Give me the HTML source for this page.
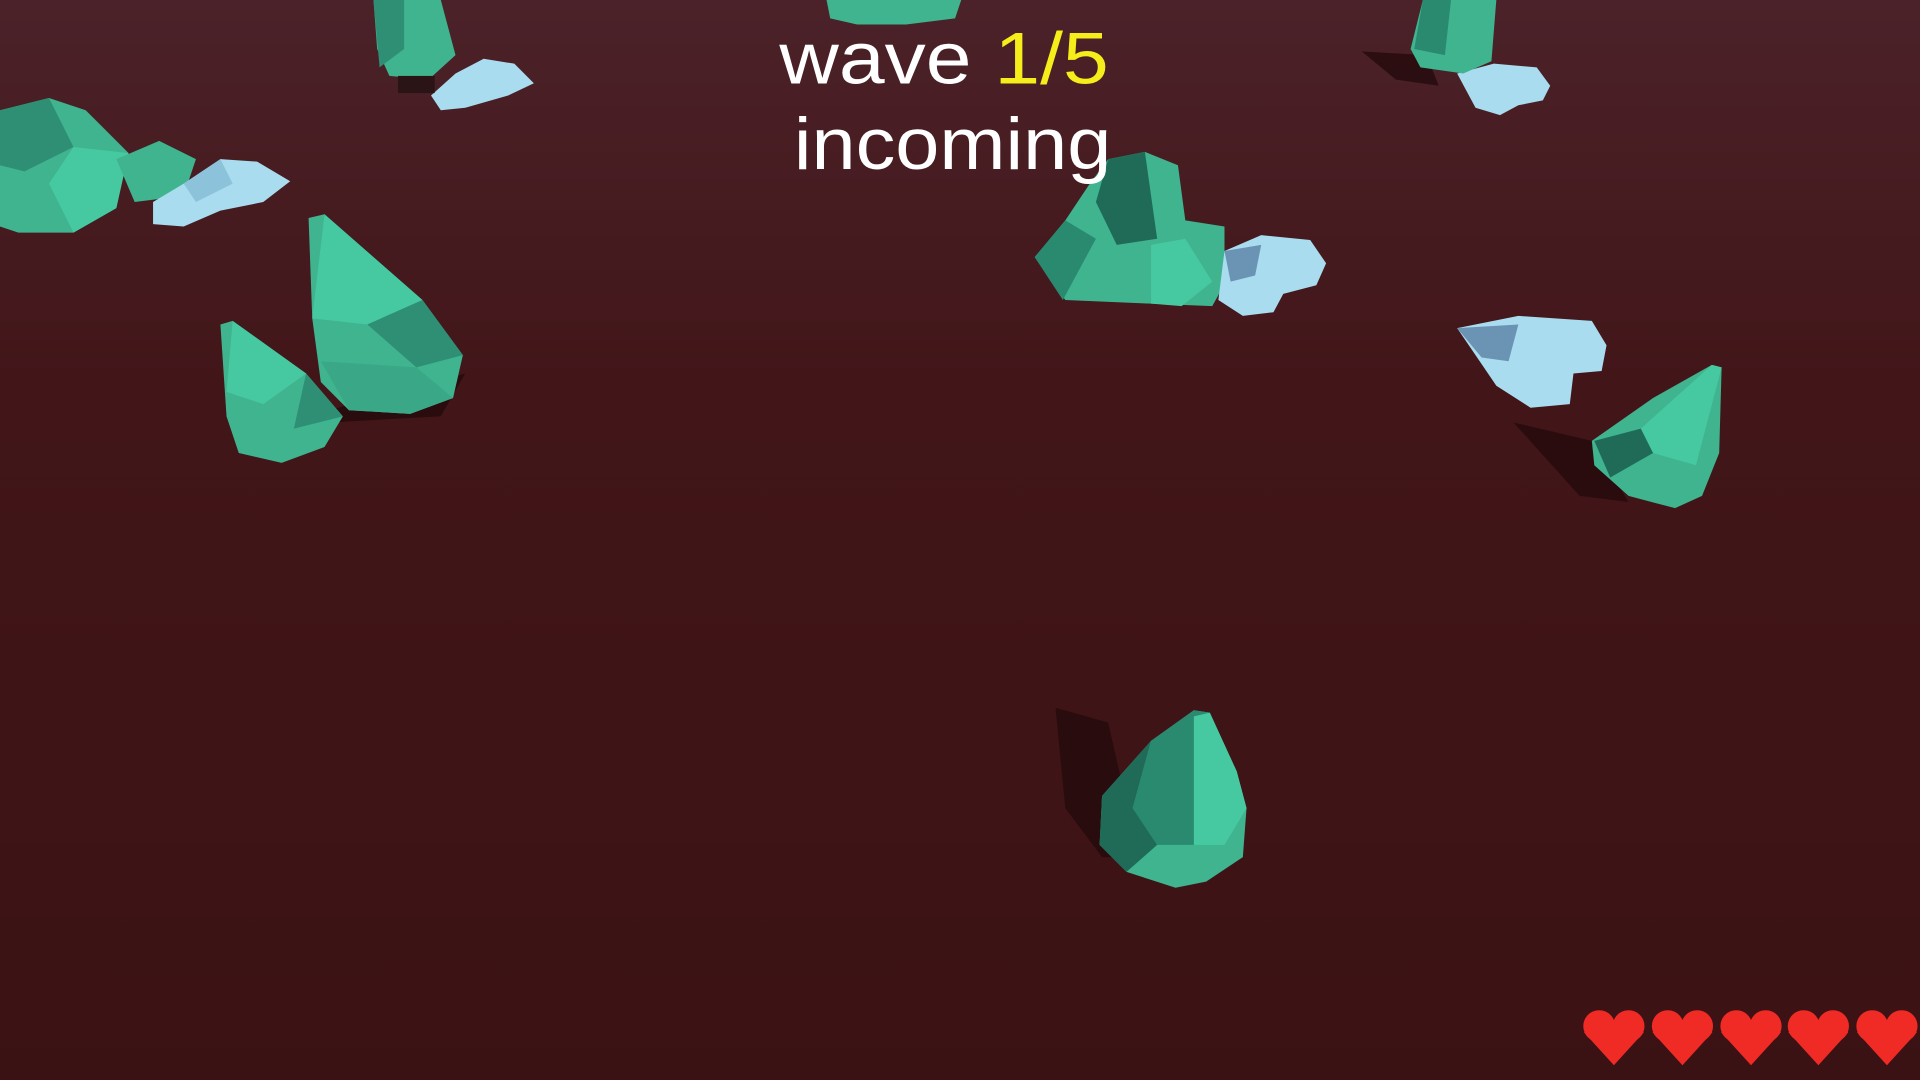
<!DOCTYPE html>
<html><head><meta charset="utf-8">
<style>
html,body{margin:0;padding:0;width:1920px;height:1080px;overflow:hidden;background:#3d1315;}
svg{display:block;width:1920px;height:1080px;}
</style></head>
<body>
<svg viewBox="0 0 1568 882" preserveAspectRatio="none" xmlns="http://www.w3.org/2000/svg">
<defs>
<linearGradient id="bg" x1="0" y1="0" x2="0" y2="1">
<stop offset="0" stop-color="#4b2229"/>
<stop offset="0.35" stop-color="#421619"/>
<stop offset="1" stop-color="#3b1214"/>
</linearGradient>
<g id="heart" fill="#f02a24">
<circle cx="-12" cy="-8" r="13"/>
<circle cx="12" cy="-8" r="13"/>
<path d="M-24.5,-3 L0,24 L24.5,-3 L0,-8Z"/>
</g>
</defs>
<rect width="1568" height="882" fill="url(#bg)"/>

<g fill="#240a0c" opacity="0.8">
<polygon points="862,578 905,590 930,700 900,700 870,660"/>
<polygon points="1236,345 1300,360 1330,410 1290,405"/>
<polygon points="1112,42 1165,45 1175,70 1140,65"/>
<polygon points="250,340 380,305 360,340 270,345"/>
</g>

<polygon points="0,90 40,80 70,90 105,125 95,170 60,190 15,190 0,185" fill="#3fb48f"/>
<polygon points="0,90 40,80 60,120 20,140 0,135" fill="#2f8f74"/>
<polygon points="60,120 105,125 95,170 60,190 40,150" fill="#46c9a0"/>
<polygon points="95,130 130,115 160,130 150,160 110,165" fill="#3fb48f"/>
<polygon points="125,165 150,150 180,130 210,132 237,148 215,165 180,172 150,185 125,183" fill="#a9dcef"/>
<polygon points="150,150 180,130 190,150 160,165" fill="#8cc3db"/>
<polygon points="352,78 372,60 395,48 420,52 436,68 415,78 380,88 360,90" fill="#a9dcef"/>

<polygon points="305,0 360,0 372,45 350,65 318,62 308,40" fill="#3fb48f"/>
<polygon points="305,0 330,0 330,40 310,55" fill="#2f8f74"/>
<rect x="325" y="62" width="30" height="14" fill="#2a1416"/>

<polygon points="252,178 265,175 345,245 378,290 370,325 335,338 285,335 262,312 255,260" fill="#3fb48f"/>
<polygon points="265,175 345,245 300,265 255,260" fill="#46c9a0"/>
<polygon points="300,265 345,245 378,290 340,300" fill="#2f8f74"/>
<polygon points="262,295 340,300 370,325 335,338 285,335" fill="#3aa886"/>
<polygon points="180,265 190,262 250,305 280,340 265,365 230,378 195,370 185,340" fill="#3fb48f"/>
<polygon points="190,262 250,305 215,330 185,320" fill="#46c9a0"/>
<polygon points="250,305 280,340 240,350" fill="#2f8f74"/>

<polygon points="675,0 785,0 780,15 740,20 700,20 678,15" fill="#3fb48f"/>

<polygon points="905,130 935,124 962,135 968,180 1000,185 1000,232 990,250 940,248 870,245 845,210 870,180 890,150" fill="#3fb48f"/>
<polygon points="905,130 935,124 945,195 912,200 895,165" fill="#1f6b57"/>
<polygon points="845,210 870,180 895,195 868,245" fill="#2a8a70"/>
<polygon points="940,200 968,195 990,230 965,250 940,248" fill="#46c9a0"/>
<polygon points="1000,205 1030,192 1070,196 1083,215 1075,233 1048,240 1040,255 1015,258 995,245" fill="#a9dcef"/>
<polygon points="1000,205 1030,200 1025,225 1005,230" fill="#6b93b4"/>

<polygon points="1190,268 1240,258 1300,262 1312,282 1308,303 1285,305 1282,330 1250,333 1222,315 1205,290" fill="#a9dcef"/>
<polygon points="1190,268 1240,265 1232,295 1210,292" fill="#6b93b4"/>
<polygon points="1190,60 1220,52 1255,55 1266,70 1260,82 1240,86 1225,94 1205,88" fill="#a9dcef"/>

<polygon points="1162,0 1222,0 1218,50 1195,60 1160,55 1152,40" fill="#3fb48f"/>
<polygon points="1162,0 1185,0 1180,45 1155,40" fill="#2a8a70"/>

<polygon points="1398,298 1406,300 1404,370 1390,405 1368,415 1330,405 1302,380 1300,360 1350,325" fill="#3fb48f"/>
<polygon points="1398,298 1406,300 1385,380 1350,370 1340,350" fill="#46c9a0"/>
<polygon points="1302,360 1340,350 1350,370 1315,390" fill="#1f6b57"/>

<polygon points="975,580 988,582 1010,630 1018,660 1015,700 985,720 960,725 920,712 898,690 900,650 940,605" fill="#3fb48f"/>
<polygon points="975,580 988,582 975,690 945,690 925,660 940,605" fill="#2a8a70"/>
<polygon points="975,585 988,582 1010,630 1018,660 1000,690 975,690" fill="#46c9a0"/>
<polygon points="900,650 940,605 925,660 945,690 920,712 898,690" fill="#1f6b57"/>

<g font-family="Liberation Sans, sans-serif" font-size="60" text-anchor="middle">
<text x="771" y="68" transform="translate(771 0) scale(1.12 1) translate(-771 0)"><tspan fill="#ffffff">wave </tspan><tspan fill="#f5ee1a">1/5</tspan></text>
<text x="778" y="138" fill="#ffffff" transform="translate(778 0) scale(1.08 1) translate(-778 0)">incoming</text>
</g>

<use href="#heart" x="1318" y="846"/>
<use href="#heart" x="1374" y="846"/>
<use href="#heart" x="1430" y="846"/>
<use href="#heart" x="1485" y="846"/>
<use href="#heart" x="1541" y="846"/>
</svg>
</body></html>
